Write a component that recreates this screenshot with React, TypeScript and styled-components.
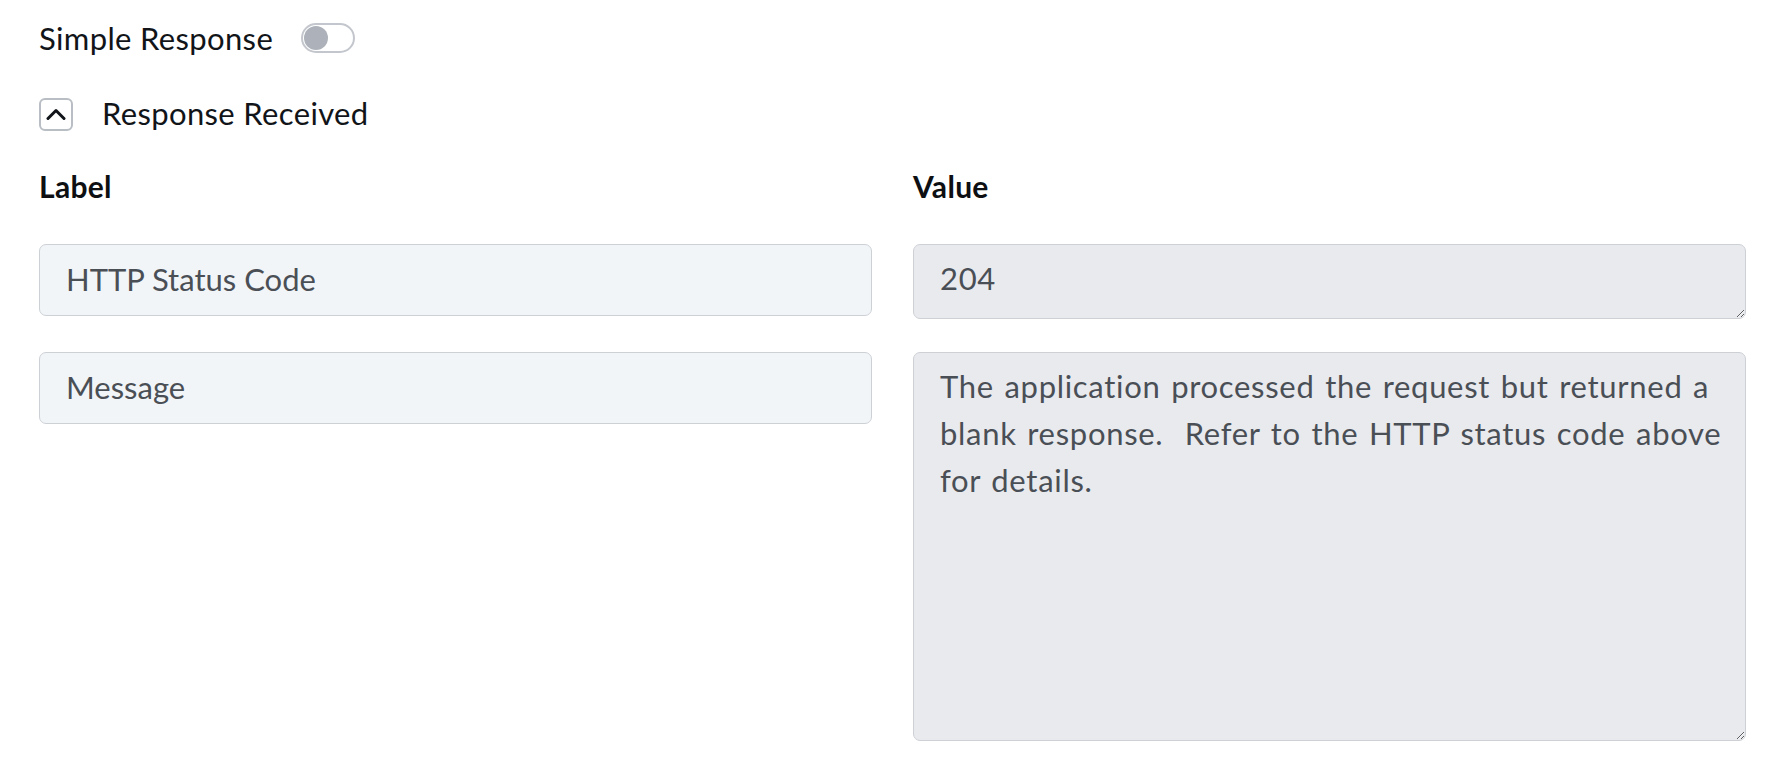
import React from 'react';
import styled, { createGlobalStyle } from 'styled-components';

const GlobalStyle = createGlobalStyle`
  html, body {
    margin: 0;
    padding: 0;
    background: #ffffff;
  }

  body {
    font-family: Lato, 'Open Sans', sans-serif;
    color: #111418;
  }
`;

type Field = {
  label: string;
  value: string;
  rows: 'single' | 'tall';
};

const fields: Array<Field> = [
  { label: 'HTTP Status Code', value: '204', rows: 'single' },
  {
    label: 'Message',
    value:
      'The application processed the request but returned a blank response.  Refer to the HTTP status code above for details.',
    rows: 'tall',
  },
];

const App: React.FC = () => {
  const [simple, setSimple] = React.useState(false);
  const [isOpen, setIsOpen] = React.useState(true);

  return (
    <>
      <GlobalStyle />
      <Page>
        <ToggleRow>
          <RowTitle>Simple Response</RowTitle>
          <Switch
            type="button"
            role="switch"
            aria-checked={simple}
            isOn={simple}
            onClick={() => setSimple((prev) => !prev)}
          >
            <Knob isOn={simple} />
          </Switch>
        </ToggleRow>

        <SectionHeader>
          <Collapse type="button" onClick={() => setIsOpen((prev) => !prev)}>
            <svg width="20" height="20" viewBox="0 0 20 20" fill="none">
              <path
                d={isOpen ? 'M2 13.5 L10 5.5 L18 13.5' : 'M2 6.5 L10 14.5 L18 6.5'}
                stroke="#111418"
                strokeWidth="3"
                strokeLinecap="round"
                strokeLinejoin="round"
              />
            </svg>
          </Collapse>
          <HeaderTitle>Response Received</HeaderTitle>
        </SectionHeader>

        {isOpen && (
          <FieldGrid>
            <ColumnHeading>Label</ColumnHeading>
            <ColumnHeading>Value</ColumnHeading>
            {fields.map((field) => (
              <React.Fragment key={field.label}>
                <LabelInput readOnly value={field.label} />
                <ValueArea readOnly value={field.value} tall={field.rows === 'tall'} />
              </React.Fragment>
            ))}
          </FieldGrid>
        )}
      </Page>
    </>
  );
};

const Page = styled.div`
  padding: 23px 34px 36px 39px;
  box-sizing: border-box;
  width: 1780px;
`;

const ToggleRow = styled.div`
  display: flex;
  align-items: center;
  gap: 28px;
  height: 30px;
`;

const RowTitle = styled.span`
  font-size: 31px;
  line-height: 36px;
  letter-spacing: 0.35px;
  color: #111418;
`;

const HeaderTitle = styled(RowTitle)`
  padding-bottom: 4px;
`;

const Switch = styled.button<{ isOn: boolean }>`
  position: relative;
  width: 54px;
  height: 30px;
  padding: 0;
  border: 2px solid ${({ isOn }) => (isOn ? '#2f6fd8' : '#c3c7cd')};
  border-radius: 15px;
  background: ${({ isOn }) => (isOn ? '#2f6fd8' : '#ffffff')};
  cursor: pointer;
`;

const Knob = styled.span<{ isOn: boolean }>`
  position: absolute;
  top: 1px;
  left: ${({ isOn }) => (isOn ? '26px' : '1px')};
  width: 24px;
  height: 24px;
  border-radius: 50%;
  background: ${({ isOn }) => (isOn ? '#ffffff' : '#adb2ba')};
`;

const SectionHeader = styled.div`
  display: flex;
  align-items: center;
  gap: 29px;
  margin-top: 45px;
  height: 33px;
`;

const Collapse = styled.button`
  display: flex;
  align-items: center;
  justify-content: center;
  width: 34px;
  height: 33px;
  padding: 0;
  border: 2px solid #b9bec5;
  border-radius: 6px;
  background: #ffffff;
  cursor: pointer;
`;

const FieldGrid = styled.div`
  display: grid;
  grid-template-columns: 833px 833px;
  column-gap: 41px;
  row-gap: 33px;
  align-items: start;
  margin-top: 35px;
`;

const ColumnHeading = styled.div`
  font-size: 30px;
  font-weight: 700;
  line-height: 40px;
  letter-spacing: 0.3px;
  color: #0d0f12;
  margin-bottom: 5px;
`;

const fieldBase = `
  box-sizing: border-box;
  width: 100%;
  margin: 0;
  border: 1.5px solid #cdd1d6;
  border-radius: 7px;
  font-family: Lato, 'Open Sans', sans-serif;
  font-size: 31px;
  color: #4a4f56;
  outline: none;
`;

const LabelInput = styled.input`
  ${fieldBase}
  height: 72px;
  padding: 0 26px 3px;
  background: #f2f5f8;
`;

const ValueArea = styled.textarea<{ tall: boolean }>`
  ${fieldBase}
  display: block;
  height: ${({ tall }) => (tall ? '389px' : '75px')};
  padding: 10px 18px 9px 26px;
  line-height: 47px;
  letter-spacing: 0.7px;
  word-spacing: 2px;
  background: #e9eaee;
  resize: vertical;
  overflow: hidden;
  white-space: pre-wrap;
`;

export default App;
